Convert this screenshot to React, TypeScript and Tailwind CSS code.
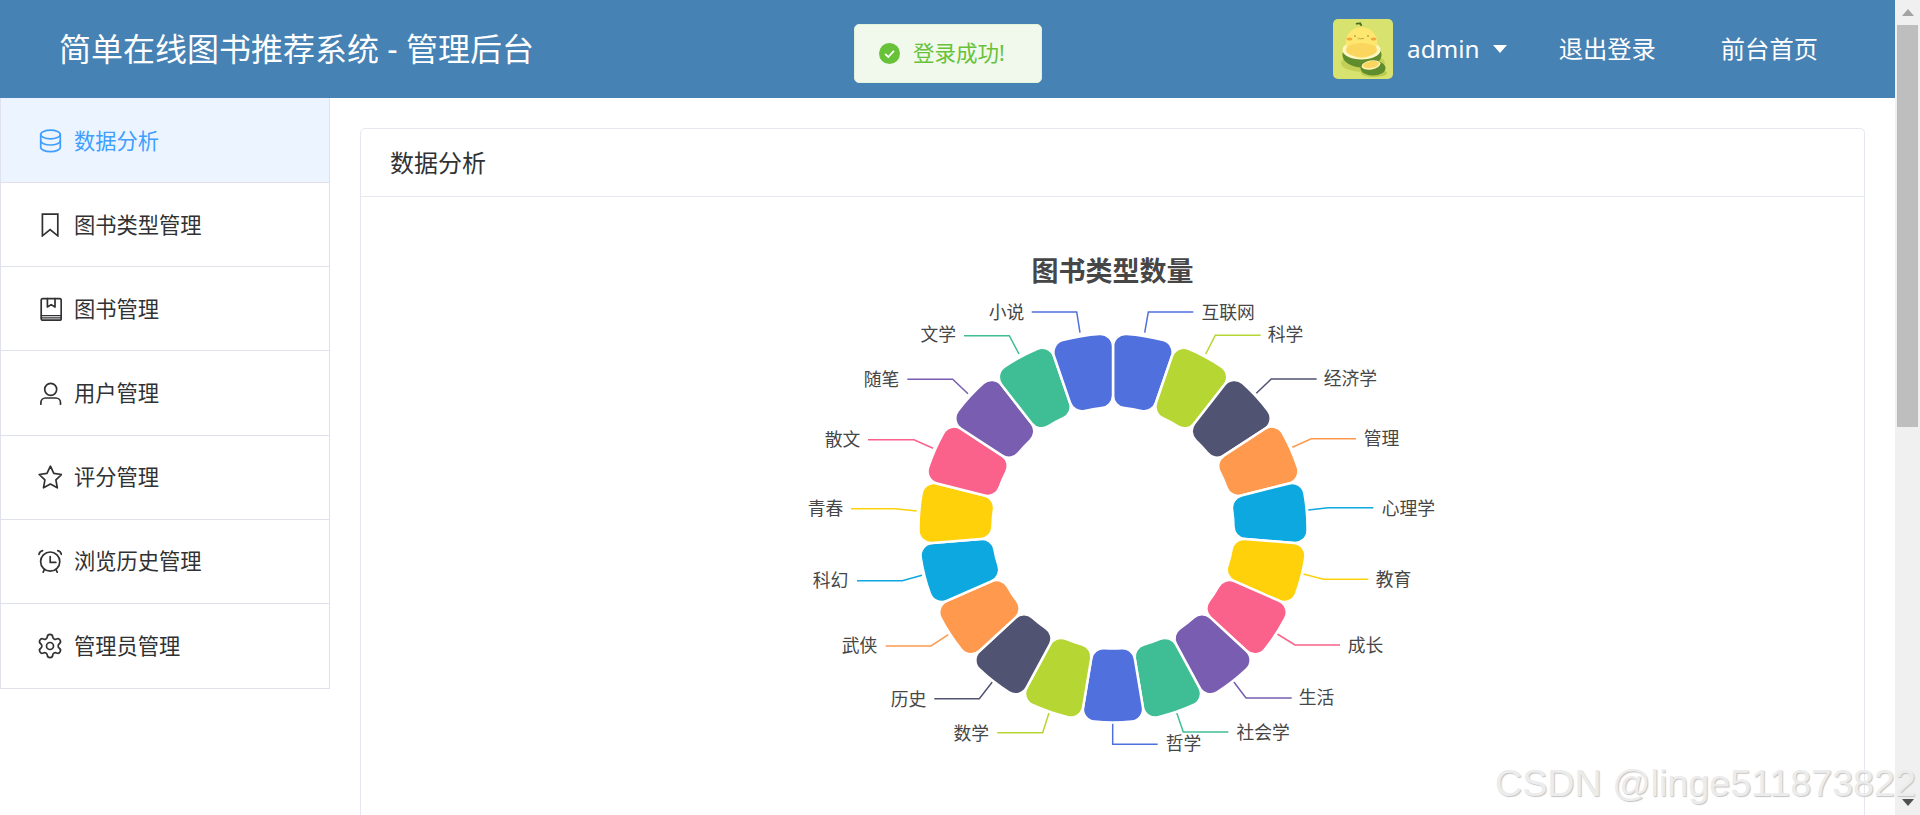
import { Settings } from "lucide-react";
import type { ReactNode } from "react";

const COLORS = ["#5070dd", "#b6d634", "#505372", "#ff994d", "#0ca8df", "#ffd10a", "#fb628b", "#785db0", "#3fbe95"];

const CX = 1113;
const CY = 528;

type Slice = { name: string; x: number; y: number; line: string };

// label x is the left edge of the text, line is in page pixels
const SLICES: Slice[] = [
  { name: "互联网", x: 1201.7, y: 311, line: "1193.3,312 1148.3,312 1144.7,332.7" },
  { name: "科学", x: 1268, y: 333, line: "1260.7,335.3 1215.3,335.3 1205.7,354" },
  { name: "经济学", x: 1324, y: 377, line: "1316.7,379 1271.3,379 1256.3,393.3" },
  { name: "管理", x: 1364, y: 437, line: "1356,438.7 1311.3,438.7 1292.3,447.3" },
  { name: "心理学", x: 1382, y: 506.7, line: "1373.3,507.7 1328.3,507.7 1308.3,510" },
  { name: "教育", x: 1376, y: 578, line: "1368.3,579.3 1323.3,579.3 1303.3,574" },
  { name: "成长", x: 1348, y: 644, line: "1340,645 1295,645 1277.3,634" },
  { name: "生活", x: 1299, y: 696, line: "1291.7,698 1246,698 1233.7,681.7" },
  { name: "社会学", x: 1236.7, y: 730.7, line: "1228.3,732 1183.3,732 1176.7,712.7" },
  { name: "哲学", x: 1166, y: 742, line: "1157.7,744.3 1112.7,744.3 1112.7,723.3" },
  { name: "数学", x: 953.7, y: 731.7, line: "997.3,732.7 1042.7,732.7 1049,712.7" },
  { name: "历史", x: 891, y: 697.7, line: "934.3,698.7 979.3,698.7 992.3,682" },
  { name: "武侠", x: 842, y: 644, line: "885.7,646 931,646 948.3,634.7" },
  { name: "科幻", x: 813, y: 578.7, line: "857,580.7 902.3,580.7 922,575.3" },
  { name: "青春", x: 808, y: 507, line: "851,508.7 895,508.7 916.7,511" },
  { name: "散文", x: 825, y: 438, line: "868,439.7 914,439.7 933,448.3" },
  { name: "随笔", x: 864, y: 378, line: "907.3,379.3 952.7,379.3 968,393.7" },
  { name: "文学", x: 920.7, y: 332.7, line: "964,335.7 1009.3,335.7 1019,354" },
  { name: "小说", x: 989, y: 311, line: "1031.7,312 1076.7,312 1080,332.7" },
];

function polar(radius: number, deg: number) {
  const rad = (deg * Math.PI) / 180;
  return `${(CX + radius * Math.sin(rad)).toFixed(2)} ${(CY - radius * Math.cos(rad)).toFixed(2)}`;
}

function sectorPath(a0: number, a1: number, R: number, r: number, c: number) {
  const dOut = (Math.asin(c / (R - c)) * 180) / Math.PI;
  const dIn = (Math.asin(c / (r + c)) * 180) / Math.PI;
  const ro = Math.sqrt((R - c) ** 2 - c ** 2);
  const ri = Math.sqrt((r + c) ** 2 - c ** 2);
  return [
    `M ${polar(ro, a0)}`,
    `A ${c} ${c} 0 0 1 ${polar(R, a0 + dOut)}`,
    `A ${R} ${R} 0 0 1 ${polar(R, a1 - dOut)}`,
    `A ${c} ${c} 0 0 1 ${polar(ro, a1)}`,
    `L ${polar(ri, a1)}`,
    `A ${c} ${c} 0 0 1 ${polar(r, a1 - dIn)}`,
    `A ${r} ${r} 0 0 0 ${polar(r, a0 + dIn)}`,
    `A ${c} ${c} 0 0 1 ${polar(ri, a0)}`,
    "Z",
  ].join(" ");
}

function NavIcon({ children }: { children: ReactNode }) {
  return (
    <svg viewBox="0 0 24 24" fill="none" stroke="currentColor" strokeWidth={1.7} strokeLinecap="round" strokeLinejoin="round" className="h-6 w-6 shrink-0">
      {children}
    </svg>
  );
}

const NAV: { label: string; icon: ReactNode; active?: boolean }[] = [
  {
    label: "数据分析",
    active: true,
    icon: (
      <NavIcon>
        <ellipse cx="12.5" cy="5.5" rx="9.8" ry="4.3" />
        <path d="M2.7 5.5v6.2c0 2.4 4.4 4.3 9.8 4.3s9.8-1.9 9.8-4.3V5.5" />
        <path d="M2.7 11.7v6.6c0 2.4 4.4 4.3 9.8 4.3s9.8-1.9 9.8-4.3v-6.6" />
      </NavIcon>
    ),
  },
  {
    label: "图书类型管理",
    icon: (
      <NavIcon>
        <path d="M4.4 1.2h15.4v21.6l-7.7-6.2-7.7 6.2z" strokeLinejoin="miter" />
      </NavIcon>
    ),
  },
  {
    label: "图书管理",
    icon: (
      <NavIcon>
        <rect x="3.2" y="1.6" width="20" height="21.6" rx="1.4" />
        <path d="M3.2 18.6h20M3.2 20.8h20" strokeWidth={1.2} />
        <path d="M9.4 1.6v8.4l3.8-2.4 3.8 2.4V1.6" />
      </NavIcon>
    ),
  },
  {
    label: "用户管理",
    icon: (
      <NavIcon>
        <circle cx="12.7" cy="8.3" r="6" />
        <path d="M2.9 23.2v-1.6a4.6 4.6 0 0 1 4.6-4.6h10.4a4.6 4.6 0 0 1 4.6 4.6v1.6" />
      </NavIcon>
    ),
  },
  {
    label: "评分管理",
    icon: (
      <NavIcon>
        <path d="M12.4 1.2l3.4 7.2 7.8 1.1-5.7 5.4 1.4 7.9-6.9-3.8-6.9 3.8 1.4-7.9-5.7-5.4 7.8-1.1z" />
      </NavIcon>
    ),
  },
  {
    label: "浏览历史管理",
    icon: (
      <NavIcon>
        <circle cx="12.2" cy="12.6" r="9.6" />
        <path d="M12.2 7.6v5.8h5.6" />
        <path d="M1 5.4A5 5 0 0 1 4.6 1.6M23.4 5.4a5 5 0 0 0-3.6-3.8" />
        <path d="M6.4 20.6l-1.2 2.6M18 20.6l1.2 2.6" />
      </NavIcon>
    ),
  },
  {
    label: "管理员管理",
    icon: <Settings strokeWidth={1.45} className="-m-0.5 h-7 w-7 shrink-0" />,
  },
];

function Avatar() {
  return (
    <svg viewBox="0 0 60 60" className="h-[60px] w-[60px] rounded-[5px]">
      <rect width="60" height="60" fill="#d8e26f" />
      <ellipse cx="30" cy="44" rx="22" ry="9" fill="#c3cf56" />
      <ellipse cx="41" cy="54" rx="13" ry="4" fill="#bcc94e" />
      <ellipse cx="29" cy="36" rx="19.5" ry="12.5" fill="#5f8d2e" />
      <ellipse cx="28.5" cy="31" rx="19" ry="9.5" fill="#fff6c4" />
      <circle cx="28.5" cy="23.5" r="15.5" fill="#fde76f" />
      <ellipse cx="28.5" cy="31" rx="15.5" ry="7" fill="#fbd65f" />
      <ellipse cx="16.5" cy="20" rx="2.8" ry="1.5" fill="#f5a63a" />
      <ellipse cx="40.5" cy="20" rx="2.8" ry="1.5" fill="#f5a63a" />
      <path d="M24.5 19q1 1.8 2.2.3 1.1 1.5 2.2 0 1.1 1.5 2.2-.3" fill="none" stroke="#8b7a2a" strokeWidth={0.6} />
      <circle cx="22" cy="17" r="0.7" fill="#6b5d1e" />
      <circle cx="35" cy="17" r="0.7" fill="#6b5d1e" />
      <path d="M23 5q3-1.5 5.5 1M27 3.5l1.5 3.5" stroke="#4d6b22" strokeWidth={1.6} fill="none" />
      <ellipse cx="40" cy="49" rx="12.5" ry="7.5" fill="#5f8d2e" />
      <ellipse cx="38" cy="46" rx="9.5" ry="4.5" fill="#fff2b4" transform="rotate(-10 38 46)" />
      <ellipse cx="38" cy="45.5" rx="8" ry="3.4" fill="#fbd65f" transform="rotate(-10 38 45.5)" />
    </svg>
  );
}

function Scrollbar() {
  return (
    <div className="flex w-[25px] shrink-0 flex-col bg-[#f0f0f0]">
      <div className="flex h-[25px] shrink-0 items-center justify-center">
        <div className="h-0 w-0 border-x-[6px] border-b-[7px] border-x-transparent border-b-[#a3a3a3]" />
      </div>
      <div className="mx-[2px] h-[402px] shrink-0 bg-[#bebebe]" />
      <div className="mt-auto flex h-[25px] shrink-0 items-center justify-center">
        <div className="h-0 w-0 border-x-[6px] border-t-[7px] border-x-transparent border-t-[#505050]" />
      </div>
    </div>
  );
}

function Chart() {
  const step = 360 / SLICES.length;
  return (
    <svg viewBox="361 197 1503 620" className="block h-[620px] w-[1503px]">
      <text x={1112.5} y={270} textAnchor="middle" dominantBaseline="central" fill="#464646" className="text-[27px] font-bold">
        图书类型数量
      </text>
      {SLICES.map((s, i) => {
        const color = COLORS[i % COLORS.length];
        return (
          <g key={s.name}>
            <polyline points={s.line} fill="none" stroke={color} strokeWidth={1.5} />
            <path d={sectorPath(i * step, (i + 1) * step, 194.5, 120.5, 12.5)} fill={color} stroke="#fff" strokeWidth={2.5} />
          </g>
        );
      })}
      {SLICES.map((s) => (
        <text key={s.name} x={s.x - 0.3} y={s.y + 0.8} dominantBaseline="central" fill="#464646" stroke="#fff" strokeWidth={2.5} paintOrder="stroke" className="text-[17.8px]">
          {s.name}
        </text>
      ))}
    </svg>
  );
}

export default function App() {
  return (
    <div className="relative flex h-[815px] w-[1920px] overflow-hidden bg-white font-['Noto_Sans','Noto_Sans_CJK_SC',sans-serif]">
      <div className="flex w-[1895px] flex-col">
        <header className="flex h-[98px] shrink-0 items-center bg-[#4682b4] pl-[59px] pr-[77px] text-white">
          <h1 className="text-[32px] font-normal">简单在线图书推荐系统 - 管理后台</h1>
          <div className="ml-auto flex items-center text-[24.3px]">
            <Avatar />
            <span className="ml-[14px]">admin</span>
            <div className="ml-[13px] h-0 w-0 border-x-[7px] border-t-[8px] border-x-transparent border-t-white" />
            <span className="ml-[52px]">退出登录</span>
            <span className="ml-[65px]">前台首页</span>
          </div>
        </header>
        <div className="flex min-h-0 flex-1">
          <aside className="w-[330px] shrink-0">
            <ul className="border-x border-b border-[#dfe2ec]">
              {NAV.map((item) => (
                <li
                  key={item.label}
                  className={
                    item.active
                      ? "flex h-[85px] items-center gap-[12px] border-b border-[#dfe2ec] bg-[#ecf5ff] pl-[37px] pt-[1px] text-[21.25px] text-[#409eff]"
                      : "flex h-[84.2px] items-center gap-[12px] border-b border-[#dfe2ec] pl-[37px] text-[21.25px] text-[#303133] last:border-b-0"
                  }
                >
                  {item.icon}
                  {item.label}
                </li>
              ))}
            </ul>
          </aside>
          <main className="min-w-0 flex-1 pl-[30px] pr-[30px] pt-[30px]">
            <div className="h-[760px] rounded-[5px] border border-[#e6e8f0] bg-white">
              <div className="flex h-[68px] items-center border-b border-[#e6e8f0] pl-[29px] text-[24px] text-[#303133]">数据分析</div>
              <Chart />
            </div>
          </main>
        </div>
      </div>
      <Scrollbar />
      <div className="absolute left-[854px] top-[24px] flex h-[59px] w-[188px] items-center rounded-[5px] border border-[#e1f3d8] bg-[#f0f9eb] pl-[24px] text-[21.5px] text-[#67c23a]">
        <svg viewBox="0 0 20 20" className="h-[21px] w-[21px]">
          <circle cx="10" cy="10" r="10" fill="#67c23a" />
          <path d="M5.8 10.3l3 3 5.4-5.8" fill="none" stroke="#fff" strokeWidth={1.6} />
        </svg>
        <span className="ml-[13px]">登录成功!</span>
      </div>
      <div className="absolute left-[1495px] top-[760px] font-['Liberation_Sans',sans-serif] text-[37.7px] leading-[46px] text-[#ececec] [text-shadow:1px_1px_1px_#c4c4c4]">
        CSDN @linge511873822
      </div>
    </div>
  );
}
